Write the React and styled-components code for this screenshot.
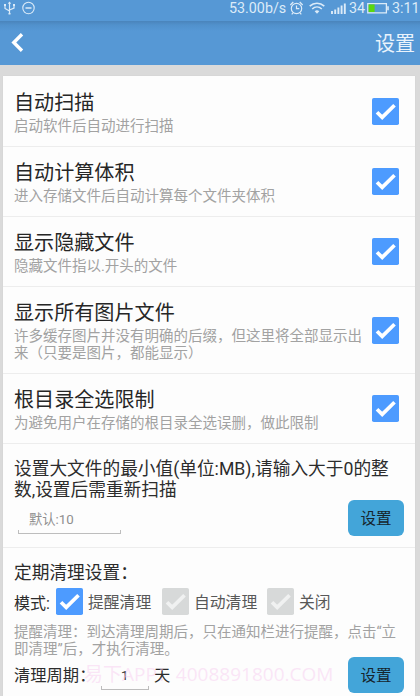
import React from "react";
import styled, { createGlobalStyle } from "styled-components";

const Global = createGlobalStyle`
  * { box-sizing: border-box; }
  html, body { margin: 0; height: 696px; overflow: hidden; background: #dadada; }
  body { font-family: Roboto, "Noto Sans CJK SC", sans-serif; color: #2c2c2c; }
`;

const Screen = styled.div`
  position: relative;
  width: 420px;
  height: 696px;
  overflow: hidden;
  display: flex;
  flex-direction: column;
  background: #dadada;
`;

const StatusBar = styled.div`
  height: 21px;
  flex: none;
  display: flex;
  align-items: center;
  padding: 0 1px 6px 3px;
  background: #5698d5;
  color: #dcebf8;
  font-size: 14px;
  line-height: 16px;
  white-space: nowrap;
`;
const StatusIcon = styled.svg`
  flex: none;
  display: block;
  width: ${(p) => p.$w}px;
  height: 14px;
  margin-left: ${(p) => p.$gap || 0}px;
  fill: none;
  stroke: #dcebf8;
  overflow: visible;
`;
const StatusText = styled.span`
  flex: none;
  width: ${(p) => p.$w}px;
  margin-left: ${(p) => p.$gap || 0}px;
  font-size: 14.3px;
`;
const Spacer = styled.div`
  flex: 1;
`;

const Header = styled.header`
  height: 44px;
  flex: none;
  display: flex;
  align-items: center;
  justify-content: space-between;
  padding: 0 5px 0 11px;
  color: #e9f3fc;
  background: linear-gradient(#4a84bb 0, #5191cc 4px, #5698d5 10px);
`;
const BackIcon = styled.svg`
  display: block;
  width: 13px;
  height: 19px;
  margin-top: -2px;
`;
const HeaderTitle = styled.h1`
  margin: 1px 0 0;
  font-size: 20px;
  line-height: 24px;
  font-weight: 400;
`;

const Card = styled.main`
  flex: 1;
  min-height: 0;
  margin: 11px 5px 0 3px;
  background: #fdfdfd;
  box-shadow: 0 0 1px #c8c8c8;
`;
const Row = styled.section`
  height: ${(p) => p.$h}px;
  display: flex;
  align-items: center;
  justify-content: space-between;
  padding: 0 16px 0 11px;
  border-bottom: 1px solid #ededed;
`;
const RowText = styled.div`
  width: 352px;
  padding-top: 3px;
  white-space: nowrap;
`;
const RowTitle = styled.h2`
  margin: 0 0 3px;
  font-size: 20.1px;
  line-height: 24px;
  font-weight: 400;
  color: #262626;
`;
const Description = styled.p`
  margin: 0;
  font-size: 14.5px;
  line-height: 17px;
  white-space: nowrap;
  color: #a2a2a2;
`;
const Box = styled.svg`
  flex: none;
  display: block;
  width: 27px;
  height: 27px;
`;

const SizeSection = styled.section`
  height: 104px;
  padding: 15px 11px 0;
  border-bottom: 1px solid #ededed;
`;
const Prompt = styled.p`
  margin: 0;
  font-size: 17.7px;
  line-height: 21px;
  white-space: nowrap;
  color: #2c2c2c;
`;
const ControlLine = styled.div`
  display: flex;
  justify-content: space-between;
  align-items: flex-start;
`;
const Input = styled.div`
  width: ${(p) => p.$w}px;
  height: 24px;
  margin: ${(p) => p.$m};
  padding-left: ${(p) => p.$pad}px;
  font-size: 13.3px;
  line-height: 20px;
  color: ${(p) => p.$color};
  background:
    linear-gradient(#bdbdbd, #bdbdbd) left bottom / 1px 4px no-repeat,
    linear-gradient(#bdbdbd, #bdbdbd) right bottom / 1px 4px no-repeat,
    linear-gradient(#bdbdbd, #bdbdbd) left bottom / 100% 1px no-repeat;
`;
const Button = styled.button`
  flex: none;
  width: 56px;
  height: 36px;
  margin-top: -1px;
  padding: 3px 0 0;
  border: 0;
  border-radius: 6px;
  background: #43a5d9;
  color: #16242c;
  font: 400 15.5px/33px Roboto, "Noto Sans CJK SC", sans-serif;
`;
const CleanSection = styled.section`
  padding: 15px 11px 0;
`;
const ModeLine = styled.div`
  display: flex;
  align-items: center;
  height: 27px;
  margin: 4px 0 9px;
  font-size: 16px;
  white-space: nowrap;
`;
const ModeName = styled.span`
  width: 42px;
`;
const ModeOption = styled.span`
  display: flex;
  align-items: center;
  gap: 5px;
  width: ${(p) => p.$w}px;
  color: #585858;
  font-size: 15.8px;
`;
const CycleLabel = styled.span`
  width: ${(p) => p.$w}px;
  font-size: 16.3px;
  line-height: 36px;
  white-space: nowrap;
`;
const CycleLine = styled.div`
  display: flex;
  align-items: flex-start;
  height: 36px;
`;
const Watermark = styled.div`
  position: absolute;
  left: 84px;
  top: 662px;
  font: 400 19px/24px "Open Sans", "Noto Sans CJK SC", sans-serif;
  white-space: nowrap;
  color: rgba(247, 205, 240, 0.5);
  pointer-events: none;
`;

function Check({ off }) {
  return (
    <Box viewBox="0 0 27 27">
      <rect width="27" height="27" rx="1.8" fill={off ? "#d7d9d9" : "#4d9bff"} />
      <path d="M5 14.2 10.2 19.3 22.5 7.2" fill="none" stroke={off ? "#f0f1f1" : "#fff"} strokeWidth="3.7" />
    </Box>
  );
}

const settings = [
  { title: "自动扫描", lines: ["启动软件后自动进行扫描"], h: 71 },
  { title: "自动计算体积", lines: ["进入存储文件后自动计算每个文件夹体积"], h: 70 },
  { title: "显示隐藏文件", lines: ["隐藏文件指以.开头的文件"], h: 70 },
  { title: "显示所有图片文件", lines: ["许多缓存图片并没有明确的后缀，但这里将全部显示出", "来（只要是图片，都能显示）"], h: 87 },
  { title: "根目录全选限制", lines: ["为避免用户在存储的根目录全选误删，做此限制"], h: 70 },
];

export default function App() {
  return (
    <Screen>
      <Global />
      <StatusBar>
        <StatusIcon $w={13} viewBox="0 0 13 14" strokeWidth="1.2">
          <path d="M6.5 1v12M2 4v3.5L6.5 10M11 4v3L6.5 9" />
          <path d="M4.8 2.8 6.5.5l1.7 2.3zM1 3h2v2H1zM10 3h2v2h-2zM5.5 12h2v1.5h-2z" fill="#dcebf8" stroke="none" />
        </StatusIcon>
        <StatusIcon $w={13} $gap={6} viewBox="0 0 13 14" strokeWidth="1.1">
          <circle cx="6.5" cy="7" r="5.7" />
          <path d="M3.5 7h6" strokeWidth="1.5" />
        </StatusIcon>
        <Spacer />
        <StatusText $w={58}>53.00b/s</StatusText>
        <StatusIcon $w={13} $gap={3} viewBox="0 0 13 14" strokeWidth="1.2">
          <circle cx="6.5" cy="7.5" r="5.2" />
          <path d="M6.5 4.5v3.2h2.8M.3 4 3.3 1M12.7 4 9.7 1M3 11.8l-1.3 1.5M10 11.8l1.3 1.5" />
        </StatusIcon>
        <StatusIcon $w={16} $gap={6} viewBox="0 0 16 14" strokeWidth="1.6">
          <path d="M.7 5.2C5 1.2 11 1.2 15.3 5.2M3.2 8C6 5.4 10 5.4 12.8 8" />
          <path d="M5.7 10.3Q8 8.4 10.3 10.3L8 12.8z" fill="#dcebf8" stroke="none" />
        </StatusIcon>
        <StatusIcon $w={15} $gap={6} viewBox="0 0 15 14" strokeWidth="1.9">
          <path d="M1 13v-3M4.2 13V8.5M7.4 13V6.5M10.6 13V4.5M13.8 13V2.5" />
        </StatusIcon>
        <StatusText $w={18} $gap={3}>34</StatusText>
        <StatusIcon $w={22} viewBox="0 0 22 14" strokeWidth="1.3">
          <path d="M.8 2.6h18.6v9.2H.8z" />
          <path d="M1.6 3.4h6v7.6h-6z" fill="#5bd80c" stroke="none" />
          <path d="M21 5.2v4" strokeWidth="1.6" />
        </StatusIcon>
        <StatusText $w={27} $gap={3}>3:11</StatusText>
      </StatusBar>
      <Header>
        <BackIcon viewBox="0 0 13 19">
          <path d="M11 1.3 2.8 9.5 11 17.7" fill="none" stroke="#fff" strokeWidth="3.4" />
        </BackIcon>
        <HeaderTitle>设置</HeaderTitle>
      </Header>
      <Card>
        {settings.map((s) => (
          <Row key={s.title} $h={s.h}>
            <RowText>
              <RowTitle>{s.title}</RowTitle>
              {s.lines.map((line) => (
                <Description key={line}>{line}</Description>
              ))}
            </RowText>
            <Check />
          </Row>
        ))}
        <SizeSection>
          <Prompt>设置大文件的最小值(单位:MB),请输入大于0的整</Prompt>
          <Prompt>数,设置后需重新扫描</Prompt>
          <ControlLine>
            <Input $w={103} $m="9px 0 0 4px" $pad={11} $color="#8f8f8f">默认:10</Input>
            <Button>设置</Button>
          </ControlLine>
        </SizeSection>
        <CleanSection>
          <Prompt>定期清理设置：</Prompt>
          <ModeLine>
            <ModeName>模式:</ModeName>
            <ModeOption $w={106}><Check />提醒清理</ModeOption>
            <ModeOption $w={105}><Check off />自动清理</ModeOption>
            <ModeOption $w={70}><Check off />关闭</ModeOption>
          </ModeLine>
          <Description>提醒清理：到达清理周期后，只在通知栏进行提醒，点击“立</Description>
          <Description>即清理”后，才执行清理。</Description>
          <CycleLine>
            <CycleLabel $w={87}>清理周期：</CycleLabel>
            <Input $w={48} $m="8px 5px 0 0" $pad={20} $color="#333">1</Input>
            <CycleLabel $w={17}>天</CycleLabel>
            <Spacer />
            <Button>设置</Button>
          </CycleLine>
        </CleanSection>
      </Card>
      <Watermark>易下APP：4008891800.COM</Watermark>
    </Screen>
  );
}
